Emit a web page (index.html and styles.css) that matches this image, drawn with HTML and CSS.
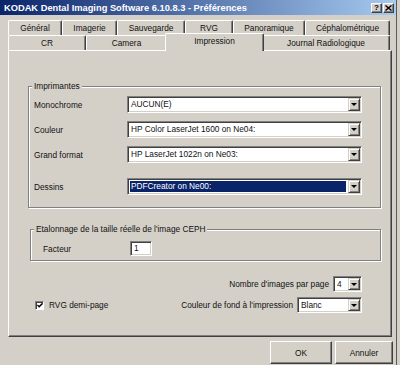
FILE: index.html
```html
<!DOCTYPE html>
<html lang="fr">
<head>
<meta charset="utf-8">
<title>Préférences</title>
<link rel="stylesheet" href="styles.css">
</head>
<body>
<div class="window">
  <div class="titlebar">
    <span class="title">KODAK Dental Imaging Software 6.10.8.3 - Préférences</span>
    <div class="tbtns">
      <span class="tbtn help">?</span>
      <span class="tbtn close"><svg width="7" height="6" viewBox="0 0 7 6"><path d="M0.5 0.5L6.5 5.5M6.5 0.5L0.5 5.5" stroke="#000" stroke-width="1.4"/></svg></span>
    </div>
  </div>
  <div class="client">
    <div class="tabs">
      <div class="tabrow">
        <div class="tab w54">Général</div>
        <div class="tab w55">Imagerie</div>
        <div class="tab w68">Sauvegarde</div>
        <div class="tab w48">RVG</div>
        <div class="tab w72">Panoramique</div>
        <div class="tab w85">Céphalométrique</div>
      </div>
      <div class="tabrow">
        <div class="tab w78">CR</div>
        <div class="tab w81">Camera</div>
        <div class="tab w95 active">Impression</div>
        <div class="tab w128">Journal Radiologique</div>
      </div>
    </div>
    <div class="page">
      <div class="group printers">
        <div class="legend">Imprimantes</div>
        <div class="rows">
          <div class="field"><span class="lbl">Monochrome</span><div class="combo"><span class="val">AUCUN(E)</span><span class="drop"><i class="tri"></i></span></div></div>
          <div class="field"><span class="lbl">Couleur</span><div class="combo"><span class="val">HP Color LaserJet 1600 on Ne04:</span><span class="drop"><i class="tri"></i></span></div></div>
          <div class="field"><span class="lbl">Grand format</span><div class="combo"><span class="val">HP LaserJet 1022n on Ne03:</span><span class="drop"><i class="tri"></i></span></div></div>
          <div class="field gap"><span class="lbl">Dessins</span><div class="combo"><span class="val sel">PDFCreator on Ne00:</span><span class="drop"><i class="tri"></i></span></div></div>
        </div>
      </div>
      <div class="group ceph">
        <div class="legend">Etalonnage de la taille réelle de l'image CEPH</div>
        <div class="factor"><span class="lbl2">Facteur</span><span class="input">1</span></div>
      </div>
      <div class="bottom">
        <div class="opt nb"><span>Nombre d'images par page</span><div class="combo small w29"><span class="val">4</span><span class="drop"><i class="tri"></i></span></div></div>
        <div class="chk"><span class="box"><svg width="7" height="7" viewBox="0 0 7 7"><path d="M0.5 3L2.5 5L6.5 1" fill="none" stroke="#000" stroke-width="1.6"/></svg></span><span>RVG demi-page</span></div>
        <div class="opt"><span>Couleur de fond à l'impression</span><div class="combo small w65"><span class="val">Blanc</span><span class="drop"><i class="tri"></i></span></div></div>
      </div>
    </div>
    <div class="buttons">
      <button class="btn ok">OK</button>
      <button class="btn cancel">Annuler</button>
    </div>
  </div>
</div>
</body>
</html>
```
FILE: styles.css
```css
* { box-sizing: border-box; }
body {
  margin: 0;
  background: #d4d0c8;
  font-family: "Liberation Sans", Arial, sans-serif;
  font-size: 8.3px;
  color: #111;
}
.window {
  width: 397px;
  height: 365px;
  background: #d4d0c8;
  border-right: 1px solid #5a5a5a;
  overflow: hidden;
}
.titlebar {
  height: 15px;
  background: linear-gradient(to right, #0a246a, #a6caf0);
  display: flex;
  align-items: center;
  justify-content: space-between;
  padding: 0 2px 0 4px;
}
.title {
  color: #fff;
  font-weight: bold;
  font-size: 9.3px;
  white-space: nowrap;
}
.tbtns { display: flex; gap: 1px; }
.tbtn {
  width: 11px;
  height: 10px;
  background: #d4d0c8;
  border: 1px solid;
  border-color: #fff #404040 #404040 #fff;
  box-shadow: inset -1px -1px #808080;
  display: flex;
  align-items: center;
  justify-content: center;
  font-weight: bold;
  font-size: 8px;
  line-height: 8px;
  color: #000;
}
.client { padding: 5px 0 0 8px; }
.tabrow { display: flex; width: 382px; }
.tab {
  height: 15px;
  border-top: 1px solid #fff;
  border-left: 1px solid #fff;
  border-right: 1px solid #404040;
  box-shadow: inset -1px 0 #808080;
  border-radius: 2px 2px 0 0;
  padding-top: 1px;
  line-height: 13px;
  text-align: center;
  white-space: nowrap;
  background: #d4d0c8;
}
.w54 { width: 54px; }
.w55 { width: 55px; }
.w68 { width: 68px; }
.w48 { width: 48px; }
.w72 { width: 72px; }
.w85 { width: 85px; }
.w78 { width: 78px; }
.w81 { width: 81px; }
.w95 { width: 95px; }
.w128 { width: 128px; }
.tab.active {
  width: 99px;
  height: 18px;
  margin: -2px -2px -1px;
  position: relative;
  z-index: 1;
}
.page {
  width: 384px;
  height: 287px;
  border-left: 1px solid #fff;
  border-top: 1px solid #fff;
  border-right: 1px solid #404040;
  border-bottom: 1px solid #404040;
  box-shadow: inset -1px -1px #808080;
  padding: 35px 10px 0 19px;
}
.group {
  border: 1px solid #808080;
  box-shadow: inset 1px 1px #fff, 1px 1px #fff;
}
.legend {
  width: fit-content;
  margin: -6px 0 0 3px;
  padding: 0 2px;
  height: 11px;
  line-height: 11px;
  background: #d4d0c8;
  white-space: nowrap;
}
.rows {
  display: flex;
  flex-direction: column;
  gap: 8px;
  padding: 4px 18px 12px 5px;
}
.field { display: flex; align-items: center; height: 17px; }
.field.gap { margin-top: 7px; }
.lbl { width: 93px; }
.combo {
  flex: 1;
  height: 17px;
  display: flex;
  background: #fff;
  border-top: 1px solid #808080;
  border-left: 1px solid #808080;
  border-bottom: 1px solid #fff;
  border-right: 1px solid #fff;
  box-shadow: inset 1px 1px #404040, inset -1px -1px #d4d0c8;
  padding: 1px;
}
.combo .val {
  flex: 1;
  padding-left: 2px;
  line-height: 13px;
  white-space: nowrap;
  overflow: hidden;
}
.combo .val.sel {
  background: #0a246a;
  color: #fff;
  margin: 1px 2px 1px 1px;
  line-height: 11px;
  padding-left: 1px;
}
.drop {
  width: 12px;
  background: #d4d0c8;
  border: 1px solid;
  border-color: #d4d0c8 #404040 #404040 #d4d0c8;
  box-shadow: inset 1px 1px #fff, inset -1px -1px #808080;
  display: flex;
  align-items: center;
  justify-content: center;
}
.tri {
  width: 0;
  height: 0;
  border-left: 3px solid transparent;
  border-right: 3px solid transparent;
  border-top: 3px solid #000;
}
.ceph {
  margin: 21px 0 0 2px;
  padding-bottom: 4px;
}
.factor {
  display: flex;
  align-items: center;
  padding: 6px 0 0 12px;
}
.lbl2 { width: 87px; }
.input {
  width: 22px;
  height: 15px;
  background: #fff;
  border-top: 1px solid #808080;
  border-left: 1px solid #808080;
  border-bottom: 1px solid #fff;
  border-right: 1px solid #fff;
  box-shadow: inset 1px 1px #404040, inset -1px -1px #d4d0c8;
  padding-left: 3px;
  line-height: 13px;
}
.bottom {
  display: grid;
  grid-template-columns: 1fr auto;
  row-gap: 5px;
  align-items: center;
  margin-top: 15px;
  padding: 0 19px 0 7px;
}
.opt {
  grid-column: 2;
  justify-self: end;
  display: flex;
  align-items: center;
  gap: 4px;
  white-space: nowrap;
}
.combo.small { flex: none; height: 16px; }
.combo.small .val { line-height: 12px; }
.w29 { width: 29px; }
.w65 { width: 65px; }
.chk {
  grid-column: 1;
  grid-row: 2;
  display: flex;
  align-items: center;
  gap: 5px;
}
.box {
  width: 9px;
  height: 9px;
  background: #fff;
  border-top: 1px solid #808080;
  border-left: 1px solid #808080;
  border-bottom: 1px solid #fff;
  border-right: 1px solid #fff;
  box-shadow: inset 1px 1px #404040;
  display: flex;
  align-items: center;
  justify-content: center;
}
.box svg { display: block; margin: 1px 0 0 1px; }
.buttons {
  width: 385px;
  display: flex;
  justify-content: flex-end;
  gap: 3px;
  margin-top: 4px;
}
.btn {
  height: 23px;
  background: #d4d0c8;
  border: 1px solid;
  border-color: #fff #404040 #404040 #fff;
  box-shadow: inset -1px -1px #808080;
  font-family: "Liberation Sans", Arial, sans-serif;
  font-size: 8.3px;
  color: #111;
  padding: 0;
}
.ok { width: 62px; }
.cancel { width: 58px; }
```
